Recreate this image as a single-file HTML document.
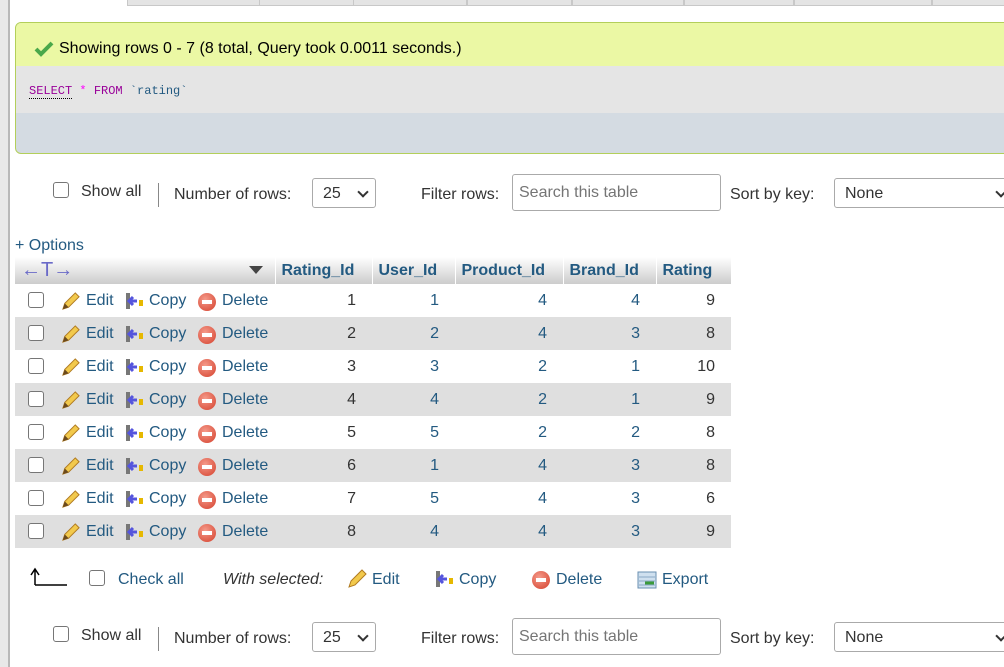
<!DOCTYPE html>
<html><head><meta charset="utf-8"><style>
*{box-sizing:border-box;margin:0;padding:0}
body{width:1004px;height:667px;overflow:hidden;background:#fff;font-family:"Liberation Sans",Arial,sans-serif;font-size:16px;color:#333;position:relative}
.a{position:absolute;white-space:nowrap}
.lb{position:absolute;left:0;top:0;width:10px;height:667px;background:#e8e8e8;border-right:2px solid #b8b8b8}
.tab{position:absolute;top:0;height:6px;background:#e4e4e4;border:1px solid #c8c8c8;border-top:none}
.cb{position:absolute;width:16px;height:16px;border:1px solid #767676;border-radius:3px;background:#fff}
.sel{position:absolute;height:30px;border:1px solid #aaa;border-radius:3px;background:#fff;padding:6px 10px;font-size:16px}
.sel:after{content:"";position:absolute;right:8px;top:9px;width:6px;height:6px;border-right:2px solid #333;border-bottom:2px solid #333;transform:rotate(45deg)}
.inp{position:absolute;height:37px;border:1px solid #aaa;border-radius:3px;padding:9px 6px;color:#757575}
.blue{color:#235a81}
table{position:absolute;left:15px;top:257px;border-collapse:collapse}
th{height:27px;background:linear-gradient(#fff,#ccc);color:#235a81;font-weight:bold;text-align:left;padding:0 6px;border-left:1px solid #fff;font-size:16px}
td{height:33px;padding:1px 16px 0 6px;text-align:right}
tr.e td{background:#dfdfdf}
td.act{text-align:left;padding:0;position:relative;width:260px}
.pen{position:absolute;left:45px;top:7px;width:21px;height:21px}
.cp{position:absolute;left:110px;top:8px;width:20px;height:18px}
.del{position:absolute;left:183px;top:9px;width:18px;height:18px;border-radius:50%;background:radial-gradient(circle at 40% 35%,#f59a8a,#d4402c);}
.del:after{content:"";position:absolute;left:4px;top:7px;width:10px;height:4px;background:#fff}
</style></head><body>
<div class="lb"></div>
<div class="tab" style="left:127px;width:133px"></div>
<div class="tab" style="left:259px;width:95px"></div>
<div class="tab" style="left:353px;width:114px"></div>
<div class="tab" style="left:467px;width:105px"></div>
<div class="tab" style="left:572px;width:112px"></div>
<div class="tab" style="left:684px;width:110px"></div>
<div class="tab" style="left:794px;width:138px"></div>
<div class="tab" style="left:932px;width:80px"></div>

<div class="a" style="left:15px;top:22px;width:1000px;height:132px;border:1px solid #b3cf5a;border-radius:6px 0 0 6px;background:#d4dbe2;overflow:hidden">
 <div style="height:43px;background:#ebf8a4;border-bottom:1px solid #ebf8a4"></div>
 <div style="height:47px;background:#e5e5e5"></div>
</div>
<svg class="a" style="left:34px;top:40px" width="20" height="18" viewBox="0 0 20 18"><path d="M2 9 L7 14 L18 3" stroke="#4aa84a" stroke-width="4" fill="none"/></svg>
<div class="a" style="left:59px;top:40px;color:#000">Showing rows 0 - 7 (8 total, Query took 0.0011 seconds.)</div>
<div class="a" style="left:29px;top:84px;font-family:'Liberation Mono',monospace;font-size:12px"><span style="color:#909;border-bottom:1px dotted #000">SELECT</span> <span style="color:#f0f">*</span> <span style="color:#909">FROM</span> <span style="color:#235a81">`rating`</span></div>

<div class="cb" style="left:53px;top:182px"></div>
<div class="a" style="left:81px;top:183px">Show all</div>
<div class="a" style="left:158px;top:183px;width:1px;height:24px;background:#888"></div>
<div class="a" style="left:174px;top:186px">Number of rows:</div>
<div class="sel" style="left:312px;top:178px;width:64px">25</div>
<div class="a" style="left:421px;top:186px">Filter rows:</div>
<div class="inp" style="left:512px;top:174px;width:209px">Search this table</div>
<div class="a" style="left:730px;top:186px">Sort by key:</div>
<div class="sel" style="left:834px;top:178px;width:180px">None</div>

<div class="a blue" style="left:15px;top:237px">+ Options</div>

<table>
<tr><th style="width:260px;position:relative;border-left:none"><span style="color:#6a6ac8;font-size:20px;font-weight:normal">←T→</span><span style="position:absolute;right:12px;top:9px;border-left:7px solid transparent;border-right:7px solid transparent;border-top:8px solid #444"></span></th>
<th style="width:97px">Rating_Id</th><th style="width:83px">User_Id</th><th style="width:108px">Product_Id</th><th style="width:93px">Brand_Id</th><th style="width:75px">Rating</th></tr>
</table>
<table style="top:284px">
<tbody id="tb"></tbody>
</table>

<svg class="a" style="left:30px;top:567px" width="38" height="20"><path d="M5 18 V3 M1 8 L5 2 L9 8 M5 18 H37" stroke="#000" stroke-width="1.5" fill="none"/></svg>
<div class="cb" style="left:89px;top:570px"></div>
<div class="a blue" style="left:118px;top:571px">Check all</div>
<div class="a" style="left:223px;top:571px;font-style:italic">With selected:</div>
<svg class="a" style="left:346px;top:568px" width="22" height="22"><path d="M3 19 L5 13 L16 2 L20 6 L9 17 Z" fill="#f2c94c" stroke="#b07a20"/></svg>
<div class="a blue" style="left:372px;top:571px">Edit</div>
<svg class="a" style="left:435px;top:570px" width="20" height="18"><rect x="1" y="1" width="4" height="16" fill="#777"/><path d="M4 9 H12 M8 5 L4 9 L8 13" stroke="#5555dd" stroke-width="3" fill="none"/><rect x="14" y="8" width="4" height="6" fill="#e6b800"/></svg>
<div class="a blue" style="left:459px;top:571px">Copy</div>
<div class="a" style="left:532px;top:571px;width:18px;height:18px;border-radius:50%;background:radial-gradient(circle at 40% 35%,#f59a8a,#d4402c)"><div style="position:absolute;left:4px;top:7px;width:10px;height:4px;background:#fff"></div></div>
<div class="a blue" style="left:556px;top:571px">Delete</div>
<svg class="a" style="left:637px;top:571px" width="20" height="18"><rect x="1" y="1" width="18" height="16" fill="#cfe0ef" stroke="#6a8fb0"/><path d="M2 6 H18 M2 10 H18 M2 14 H18" stroke="#8aa8c4"/><path d="M8 12 H17" stroke="#3a9a3a" stroke-width="3"/></svg>
<div class="a blue" style="left:662px;top:571px">Export</div>

<div class="cb" style="left:53px;top:626px"></div>
<div class="a" style="left:81px;top:627px">Show all</div>
<div class="a" style="left:158px;top:627px;width:1px;height:24px;background:#888"></div>
<div class="a" style="left:174px;top:630px">Number of rows:</div>
<div class="sel" style="left:312px;top:622px;width:64px">25</div>
<div class="a" style="left:421px;top:630px">Filter rows:</div>
<div class="inp" style="left:512px;top:618px;width:209px">Search this table</div>
<div class="a" style="left:730px;top:630px">Sort by key:</div>
<div class="sel" style="left:834px;top:622px;width:180px">None</div>

<script>
var d=[[1,1,4,4,9],[2,2,4,3,8],[3,3,2,1,10],[4,4,2,1,9],[5,5,2,2,8],[6,1,4,3,8],[7,5,4,3,6],[8,4,4,3,9]];
var w=[97,83,108,93,75],h='';
d.forEach(function(r,i){
h+='<tr class="'+(i%2?'e':'')+'"><td class="act"><div class="cb" style="left:13px;top:8px"></div>'+
'<svg class="pen" viewBox="0 0 22 22"><path d="M3 19 L5 13 L16 2 L20 6 L9 17 Z" fill="#f2c94c" stroke="#b07a20"/><path d="M3 19 L5 13 L9 17 Z" fill="#6b4a1e"/></svg>'+
'<span class="a blue" style="left:71px;top:8px">Edit</span>'+
'<svg class="cp" viewBox="0 0 20 18"><rect x="1" y="1" width="4" height="16" fill="#777"/><path d="M4 9 H12 M8 5 L4 9 L8 13" stroke="#5555dd" stroke-width="3" fill="none"/><rect x="14" y="8" width="4" height="6" fill="#e6b800"/></svg>'+
'<span class="a blue" style="left:134px;top:8px">Copy</span><div class="del"></div>'+
'<span class="a blue" style="left:207px;top:8px">Delete</span></td>';
r.forEach(function(v,j){h+='<td style="width:'+w[j]+'px;'+((j==0||j==4)?'':'color:#235a81')+'">'+v+'</td>';});
h+='</tr>';});
document.getElementById('tb').innerHTML=h;
</script>
</body></html>
